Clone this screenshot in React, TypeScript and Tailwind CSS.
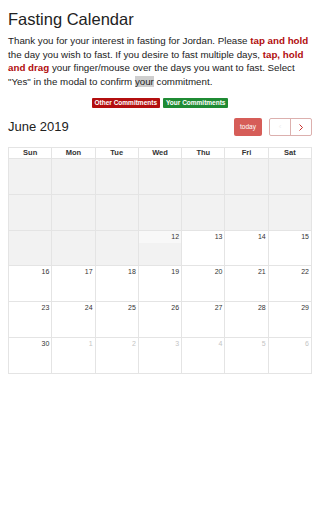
import React from 'react';

const days = ['Sun', 'Mon', 'Tue', 'Wed', 'Thu', 'Fri', 'Sat'];

type Cell = { n?: number; past?: boolean; other?: boolean; today?: boolean };

// June 2019 grid: past days are shaded and carry no number
const cells: Cell[] = [
  ...Array.from({ length: 17 }, () => ({ past: true })),
  { n: 12, today: true },
  ...[13, 14, 15, 16, 17, 18, 19, 20, 21, 22, 23, 24, 25, 26, 27, 28, 29, 30].map((n) => ({ n })),
  ...[1, 2, 3, 4, 5, 6].map((n) => ({ n, other: true })),
];

export default function App() {
  return (
    <div className="bg-white px-2 pt-[9px] text-[#222]" style={{ fontFamily: '"Liberation Sans", Arial, sans-serif' }}>
      <h1 className="text-[16.5px] leading-[20px]">Fasting Calendar</h1>
      <p className="mt-[5px] text-[9.75px] leading-[13.5px]">
        Thank you for your interest in fasting for Jordan. Please{' '}
        <b className="text-[#b10d0d]">tap and hold</b> the day you wish to fast. If you desire to fast multiple days,{' '}
        <b className="text-[#b10d0d]">tap, hold and drag</b> your finger/mouse over the days you want to fast. Select "Yes" in the
        modal to confirm <span className="bg-[#cfcfcf]">your</span> commitment.
      </p>

      <div className="mt-[10px] flex justify-center gap-[3px]">
        <span className="h-[10px] rounded-[1px] bg-[#b30f0f] px-[3px] text-[6.5px] font-bold leading-[10px] text-white">
          Other Commitments
        </span>
        <span className="h-[10px] rounded-[1px] bg-[#1f8b34] px-[3px] text-[6.5px] font-bold leading-[10px] text-white">
          Your Commitments
        </span>
      </div>

      <div className="mt-[10px] flex items-center justify-between">
        <h2 className="text-[13px] leading-[18px]">June 2019</h2>
        <div className="flex items-center">
          <button className="h-[18px] w-[28px] rounded-[2px] bg-[#d65d58] text-[6.5px] text-white">today</button>
          <div className="ml-[7px] flex h-[18px] w-[43px] rounded-[2px] border border-[#dcb0ae]">
            <span className="flex flex-1 items-center justify-center border-r border-[#dcb0ae] text-[8px] text-[#eee]">‹</span>
            <span className="flex flex-1 items-center justify-center">
              <svg width="6" height="7" viewBox="0 0 6 7" fill="none" stroke="#c9302c" strokeWidth="1">
                <path d="M1.5 0.5 L4.5 3.5 L1.5 6.5" />
              </svg>
            </span>
          </div>
        </div>
      </div>

      <div className="mt-[11px] border-l border-t border-[#e4e4e4]">
        <div className="grid grid-cols-7">
          {days.map((d) => (
            <div key={d} className="h-[11px] border-b border-r border-[#e4e4e4] text-center text-[7.5px] font-bold leading-[10px] text-[#333]">
              {d}
            </div>
          ))}
        </div>
        <div className="grid grid-cols-7">
          {cells.map((c, i) => (
            <div
              key={i}
              className={`relative h-[35.8px] border-b border-r border-[#e4e4e4] ${c.past || c.today ? 'bg-[#f2f2f2]' : 'bg-white'}`}
            >
              {c.today && <div className="h-[12px] bg-[#f8f8f8]" />}
              {c.n !== undefined && (
                <span
                  className={`absolute right-[2px] top-[2px] text-[7px] leading-[8px] ${c.other ? 'text-[#c4c4c4]' : 'text-[#333]'}`}
                >
                  {c.n}
                </span>
              )}
            </div>
          ))}
        </div>
      </div>
    </div>
  );
}
